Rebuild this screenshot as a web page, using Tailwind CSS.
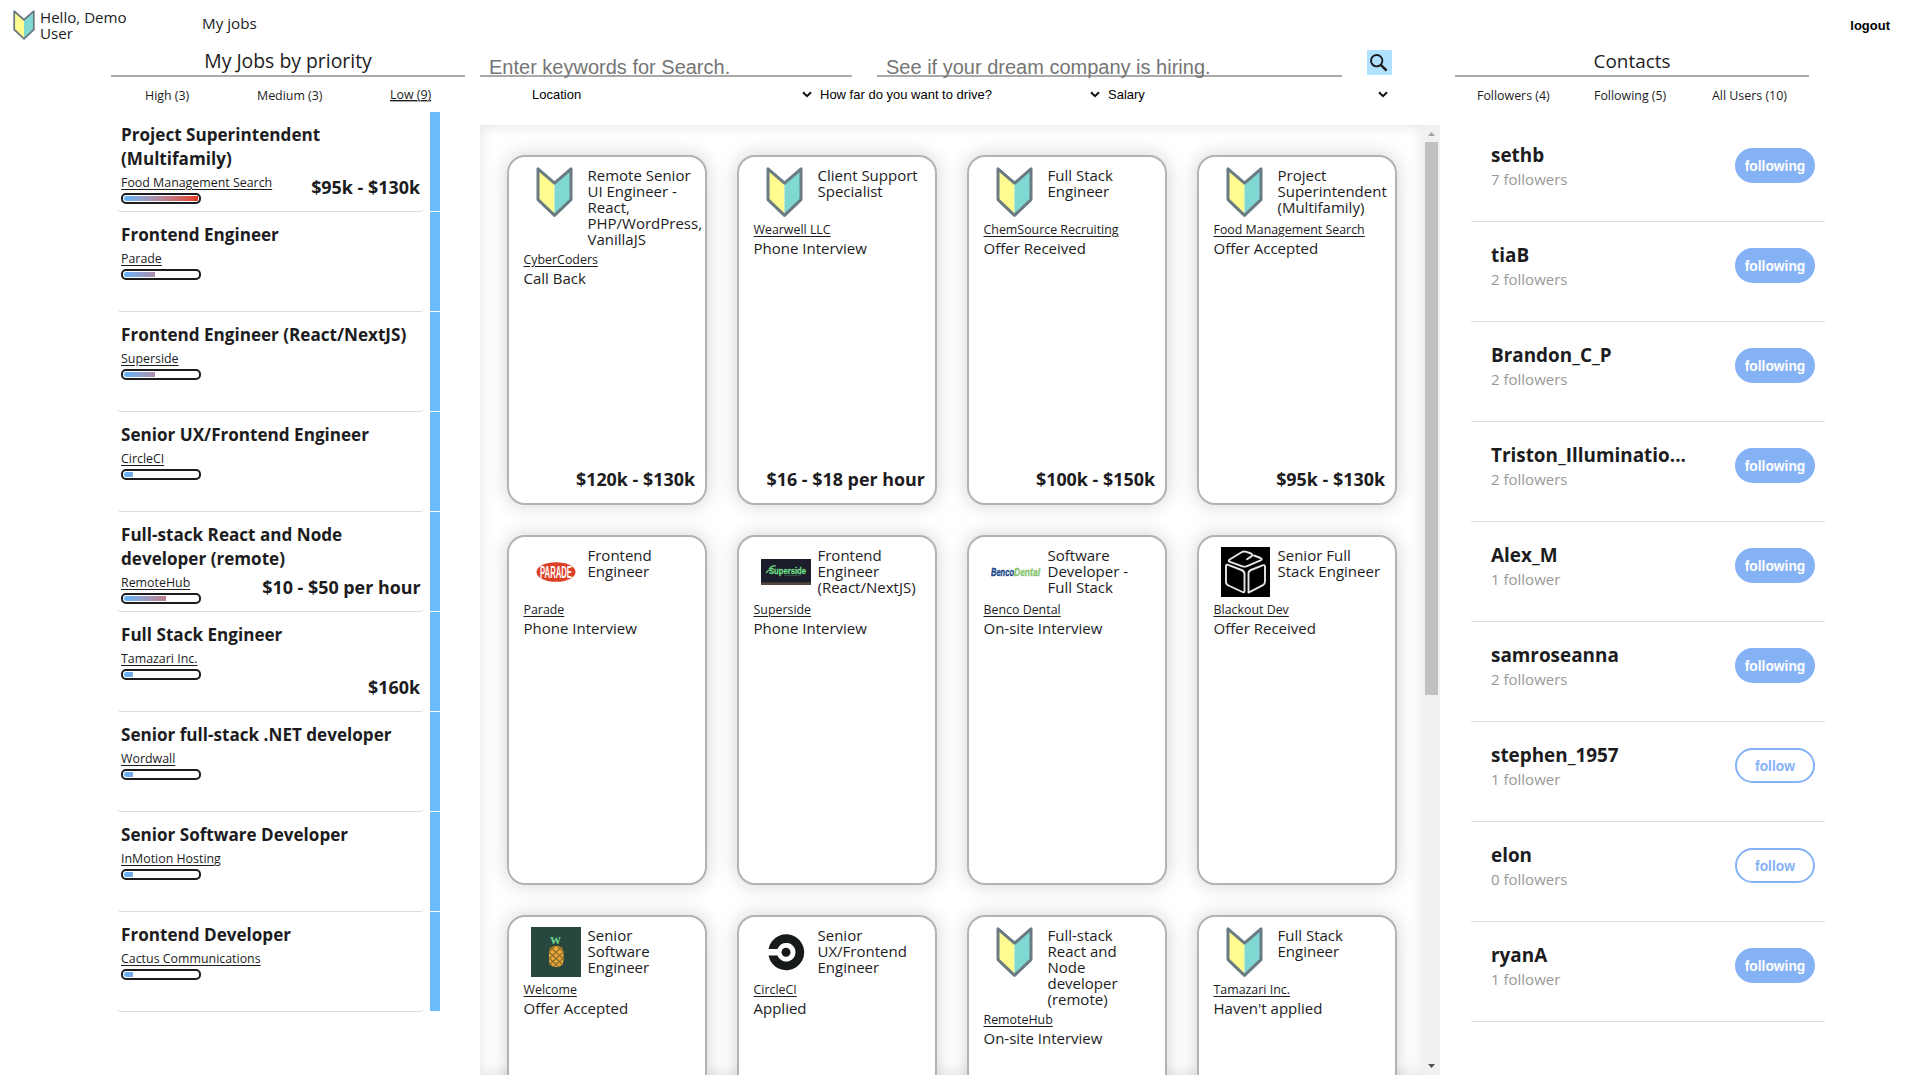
<!DOCTYPE html>
<html lang="en">
<head>
<meta charset="utf-8">
<title>My Jobs</title>
<script src="https://cdn.jsdelivr.net/npm/@tailwindcss/browser@4"></script>
</head>
<body class="h-[1079px] overflow-hidden bg-white font-['Open_Sans',sans-serif] font-normal text-[#1c1c1e] text-[15px]">

<svg width="0" height="0" class="absolute">
  <defs>
    <g id="shield">
      <path d="M2 2.6 L18.5 16.5 V48 L2 32.5 Z" fill="#fffb8f"/>
      <path d="M35 2.6 L18.5 16.5 V48 L35 32.5 Z" fill="#7fd9d2"/>
      <path d="M2 1.8 L18.5 16.2 L35 1.8 V32.6 L18.5 48.4 L2 32.6 Z" fill="none" stroke="#6b7b83" stroke-width="3" stroke-linejoin="round"/>
    </g>
    <symbol id="chev" viewBox="0 0 10 7"><path d="M1 1.2 L5 5.2 L9 1.2" fill="none" stroke="#111" stroke-width="2"/></symbol>
  </defs>
</svg>

<header class="flex h-[50px] items-start">
  <svg class="ml-[13px] mt-[10px] h-[30px] w-[22px] shrink-0" viewBox="0 0 37 50"><use href="#shield"/></svg>
  <div class="ml-[5px] mt-[9px] w-[162px] whitespace-nowrap text-[15.1px] leading-4">Hello, Demo<br>User</div>
  <a class="mt-[13px] text-[15.2px] leading-5">My jobs</a>
  <button class="ml-auto mr-[29px] mt-[16px] font-['Liberation_Sans',Arial,sans-serif] text-[13px] font-bold leading-5 text-black">logout</button>
</header>

<main class="flex h-[1029px] items-start">
  <aside class="ml-[111px] w-[354px] shrink-0">
    <h2 class="h-[27px] border-b-2 border-[#aaa] text-center text-[19.4px] leading-[22px]">My Jobs by priority</h2>
    <nav class="flex h-[35px] pt-[9px] text-[12.4px] leading-5">
      <span class="ml-[34px] w-[112px]">High (3)</span>
      <span class="w-[133px]">Medium (3)</span>
      <span class="-mt-px h-[17px] border-b-2 border-[#aaa] leading-5 underline">Low (9)</span>
    </nav>
    <div id="jobs" class="ml-[6px] w-[313px]"></div>
  </aside>

  <section class="ml-[15px] w-[960px] shrink-0">
    <div class="flex h-[27px] font-['Liberation_Sans',Arial,sans-serif] text-[20px] leading-[34px] text-[#757575]">
      <div class="w-[372px] border-b-2 border-[#aaa] pl-[9px]">Enter keywords for Search.</div>
      <div class="ml-[25px] w-[465px] border-b-2 border-[#aaa] pl-[9px]">See if your dream company is hiring.</div>
      <button class="ml-[25px] h-[25px] w-[25px] bg-[#b0e2ff] p-[3px]">
        <svg class="h-[18px] w-[18px]" viewBox="0 0 18 18"><circle cx="6.7" cy="6.7" r="5.7" fill="none" stroke="#1c1c1e" stroke-width="1.9"/><path d="M10.6 10.6 L16.6 16.6" stroke="#1c1c1e" stroke-width="2.6"/></svg>
      </button>
    </div>
    <div class="flex h-[48px] pt-[8px] font-['Liberation_Sans',Arial,sans-serif] text-[13px] leading-5 text-black">
      <div class="flex w-[340px] items-start self-start pl-[52px] pr-[8px]">Location<svg class="ml-auto mt-[6px] h-[7px] w-[10px]"><use href="#chev"/></svg></div>
      <div class="flex w-[288px] items-start self-start pr-[8px]">How far do you want to drive?<svg class="ml-auto mt-[6px] h-[7px] w-[10px]"><use href="#chev"/></svg></div>
      <div class="flex w-[288px] items-start self-start pr-[8px]">Salary<svg class="ml-auto mt-[6px] h-[7px] w-[10px]"><use href="#chev"/></svg></div>
    </div>
    <div class="flex h-[950px] overflow-hidden">
      <div id="cards" class="grid h-[950px] w-[943px] grid-cols-[repeat(4,200px)] auto-rows-[350px] content-start gap-[30px] overflow-hidden pl-[27px] pt-[30px] shadow-[inset_0_0_15px_#e2e2e2]"></div>
      <div class="flex w-[17px] flex-col items-center bg-[#f1f1f1]">
        <svg class="h-[17px] w-[17px] shrink-0" viewBox="0 0 17 17"><path d="M5 11 L8.5 7 L12 11 Z" fill="#a3a3a3"/></svg>
        <div class="h-[553px] w-[13px] bg-[#c1c1c1]"></div>
        <svg class="mt-auto h-[17px] w-[17px] shrink-0" viewBox="0 0 17 17"><path d="M5 6 L8.5 10 L12 6 Z" fill="#505050"/></svg>
      </div>
    </div>
  </section>

  <aside class="ml-[15px] w-[370px] shrink-0">
    <h2 class="h-[27px] w-[354px] border-b-2 border-[#aaa] text-center text-[18.9px] leading-[22px]">Contacts</h2>
    <nav class="flex h-[45px] pt-[9px] text-[12.4px] leading-5">
      <span class="ml-[22px] w-[117px]">Followers (4)</span>
      <span class="w-[118px]">Following (5)</span>
      <span>All Users (10)</span>
    </nav>
    <div id="people" class="ml-[16px] w-[354px]"></div>
  </aside>
</main>

<script>
const jobs = [
  ['Project Superintendent<br>(Multifamily)', 'Food Management Search', 74, '$95k - $130k'],
  ['Frontend Engineer', 'Parade', 31, ''],
  ['Frontend Engineer (React/NextJS)', 'Superside', 31, ''],
  ['Senior UX/Frontend Engineer', 'CircleCI', 9, ''],
  ['Full-stack React and Node<br>developer (remote)', 'RemoteHub', 42, '$10 - $50 per hour'],
  ['Full Stack Engineer', 'Tamazari Inc.', 9, '$160k'],
  ['Senior full-stack .NET developer', 'Wordwall', 9, ''],
  ['Senior Software Developer', 'InMotion Hosting', 9, ''],
  ['Frontend Developer', 'Cactus Communications', 9, ''],
];
document.getElementById('jobs').innerHTML = jobs.map(([title, company, fill, pay]) => `
  <div class="flex h-[100px]">
    <div class="flex w-[307px] shrink-0 justify-between rounded-[4px] border-b border-[#ddd] pl-[4px] pr-[4px] pt-[11px]">
      <div class="whitespace-nowrap">
        <div class="text-[17.1px] font-bold leading-6">${title}</div>
        <div class="h-[22px] text-[12.4px] leading-[23px] underline underline-offset-2">${company}</div>
        <div class="h-[11px] w-[80px] rounded-[5px] border-2 border-[#1c1c1e] p-px">
          <div class="h-[5px] overflow-hidden rounded-l-[3px]" style="width:${fill}px"><div class="h-full w-[74px] bg-linear-to-r from-[#5db2fb] to-[#e4371b]"></div></div>
        </div>
      </div>
      <div class="-ml-20 mt-[52px] whitespace-nowrap text-[17.9px] font-bold leading-6">${pay}</div>
    </div>
    <div class="ml-[6px] h-[99px] w-[10px] shrink-0 bg-[#6bbcfd]"></div>
  </div>`).join('');

const shield = '<svg class="ml-[5px] h-[50px] w-[37px]" viewBox="0 0 37 50"><use href="#shield"/></svg>';
const parade = `<svg class="h-[50px] w-[50px]" viewBox="0 0 50 50"><ellipse cx="25" cy="25" rx="19.5" ry="9.8" fill="#dc4128"/><text x="25" y="31" text-anchor="middle" textLength="32" lengthAdjust="spacingAndGlyphs" font-family="Liberation Sans" font-weight="700" font-size="16" fill="#fff">PARADE</text></svg>`;
const superside = `<svg class="h-[50px] w-[50px]" viewBox="0 0 50 50"><rect y="12" width="50" height="26" fill="#1c1d2b"/><rect y="35.5" width="50" height="2.5" fill="#57463c"/><path d="M5 26 q2 -3 5 -3 M8 22 q3 -4 7 -3" stroke="#6fdc86" stroke-width="1.2" fill="none"/><text x="8" y="26.5" textLength="37" lengthAdjust="spacingAndGlyphs" font-family="Liberation Sans" font-weight="700" font-size="9" fill="#6fdc86" stroke="#6fdc86" stroke-width=".3">Superside</text><path d="M23 28.6 h17" stroke="#3c6b4c" stroke-width=".7"/></svg>`;
const benco = `<svg class="h-[50px] w-[50px]" viewBox="0 0 50 50"><text x="0" y="29" textLength="23" lengthAdjust="spacingAndGlyphs" font-family="Liberation Sans" font-style="italic" font-weight="700" font-size="10.5" fill="#1d4a8c" stroke="#1d4a8c" stroke-width=".4">Benco</text><text x="23" y="29" textLength="26" lengthAdjust="spacingAndGlyphs" font-family="Liberation Sans" font-style="italic" font-weight="700" font-size="10.5" fill="#85c46c" stroke="#85c46c" stroke-width=".3">Dental</text></svg>`;
const blackout = `<svg class="h-[50px] w-[50px]" viewBox="0 0 50 50"><rect width="49" height="50" fill="#000"/><g fill="none" stroke="#e6e6e6" stroke-width="1.9" stroke-linejoin="round" stroke-linecap="round"><path d="M33 8.5 L39.5 11 Q42 12.2 39.5 13.4 L25.5 19.3 Q23.5 20 21.5 19.3 L9 14.8 Q6.5 13.7 9 12.3 L21 5 Q23 4 25.5 4.8 L30 6.5 Q32.5 8 30 9.6 L26 12.2"/><path d="M7 17.8 L20.5 23 Q23.5 24.2 23.5 27 V44 Q23.5 46 21.5 45 L7.5 38.5 Q5 37.4 5 35 V19.5 Q5 17 7 17.8 Z"/><path d="M27.5 45.6 V26.5 Q27.5 24 30 23 L41.5 18.3 Q44 17.5 44 20 V34.5 Q44 37 42 38.2 Z"/></g></svg>`;
const welcome = `<svg class="h-[50px] w-[50px]" viewBox="0 0 50 50"><rect width="50" height="50" fill="#28473f"/><text x="24.5" y="16.5" text-anchor="middle" textLength="11" lengthAdjust="spacingAndGlyphs" font-family="Liberation Serif" font-weight="700" font-size="11" fill="#6fdc95">W</text><rect x="18" y="19" width="14.5" height="21" rx="6.5" fill="#eba937"/><path d="M18 25 L24 19 M18 32 L31 19.5 M18 38 L32.5 25 M22 40 L32.5 31 M32.5 25 L26 19 M32.5 32 L19 20 M32 38 L18 25 M28 40 L18 31" stroke="#8a6c2c" stroke-width="1.1" fill="none"/></svg>`;
const circle = `<svg class="h-[50px] w-[50px]" viewBox="0 0 50 50"><path d="M7.5 22 A18 18 0 1 1 7.5 28.5 H16.5 A9.3 9.3 0 1 0 16.5 22 Z" fill="#161a19"/><circle cx="25" cy="25.2" r="4.5" fill="#161a19"/></svg>`;

const cards = [
  [shield, 'Remote Senior<br>UI Engineer -<br>React,<br>PHP/WordPress,<br>VanillaJS', 'CyberCoders', 'Call Back', '$120k - $130k'],
  [shield, 'Client Support<br>Specialist', 'Wearwell LLC', 'Phone Interview', '$16 - $18 per hour'],
  [shield, 'Full Stack<br>Engineer', 'ChemSource Recruiting', 'Offer Received', '$100k - $150k'],
  [shield, 'Project<br>Superintendent<br>(Multifamily)', 'Food Management Search', 'Offer Accepted', '$95k - $130k'],
  [parade, 'Frontend<br>Engineer', 'Parade', 'Phone Interview', ''],
  [superside, 'Frontend<br>Engineer<br>(React/NextJS)', 'Superside', 'Phone Interview', ''],
  [benco, 'Software<br>Developer -<br>Full Stack', 'Benco Dental', 'On-site Interview', ''],
  [blackout, 'Senior Full<br>Stack Engineer', 'Blackout Dev', 'Offer Received', ''],
  [welcome, 'Senior<br>Software<br>Engineer', 'Welcome', 'Offer Accepted', ''],
  [circle, 'Senior<br>UX/Frontend<br>Engineer', 'CircleCI', 'Applied', ''],
  [shield, 'Full-stack<br>React and<br>Node<br>developer<br>(remote)', 'RemoteHub', 'On-site Interview', ''],
  [shield, 'Full Stack<br>Engineer', 'Tamazari Inc.', "Haven't applied", ''],
];
document.getElementById('cards').innerHTML = cards.map(([logo, title, company, status, pay]) => `
  <div class="flex flex-col whitespace-nowrap rounded-[18px] border-2 border-[#b3b3b3] bg-white pb-[12px] pl-[14px] pr-[10px] pt-[10px] shadow-[0_0_20px_rgba(0,0,0,0.18)]">
    <div class="flex min-h-[50px] items-start">
      <div class="ml-[8px] w-[56.5px] shrink-0">${logo}</div>
      <div class="leading-4">${title}</div>
    </div>
    <div class="ml-[0.5px] mt-[2px] text-[12.4px] leading-[22px] underline underline-offset-2">${company}</div>
    <div class="-mt-[3px] ml-[0.5px] leading-5">${status}</div>
    <div class="mt-auto text-right text-[17.9px] font-bold leading-6">${pay}</div>
  </div>`).join('');

const people = [
  ['sethb', '7 followers', 1], ['tiaB', '2 followers', 1], ['Brandon_C_P', '2 followers', 1],
  ['Triston_Illuminatio...', '2 followers', 1], ['Alex_M', '1 follower', 1], ['samroseanna', '2 followers', 1],
  ['stephen_1957', '1 follower', 0], ['elon', '0 followers', 0], ['ryanA', '1 follower', 1],
];
document.getElementById('people').innerHTML = people.map(([name, count, on]) => `
  <div class="flex h-[100px] items-start justify-between border-b border-[#ddd] pl-[20px] pr-[10px]">
    <div class="pt-[21px]">
      <div class="text-[18.9px] font-bold leading-[25px]">${name}</div>
      <div class="-mt-px leading-6 text-[#999]">${count}</div>
    </div>
    <button class="mt-[26px] h-[35px] w-[80px] rounded-full border-2 border-[#84b2f5] pt-[2px] font-['Liberation_Sans',Arial,sans-serif] text-[13.8px] font-bold leading-4 ${on ? 'bg-[#84b2f5] text-white' : 'bg-white text-[#84b2f5]'}">${on ? 'following' : 'follow'}</button>
  </div>`).join('');
</script>
</body>
</html>
